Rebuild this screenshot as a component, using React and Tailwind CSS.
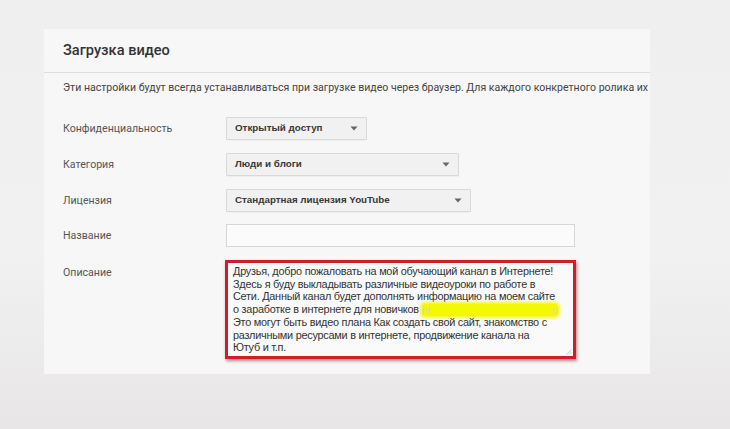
import React from "react";

function Caret() {
  return (
    <svg width="8" height="5" viewBox="0 0 8 5" className="shrink-0">
      <path d="M0.5 0.5 L7.5 0.5 L4 4.5 Z" fill="#666" />
    </svg>
  );
}

function Select({ text, width }) {
  return (
    <div
      className="h-[23px] flex items-center justify-between pl-[8px] pr-[8px] bg-[#f1f1f1] border border-[#d9d9d9] rounded-[1px] shadow-[0_1px_0_rgba(0,0,0,0.03)]"
      style={{ width }}
    >
      <span
        className="text-[9.8px] font-bold text-[#383838]"
        style={{ fontFamily: "'Liberation Sans', Arial, sans-serif" }}
      >
        {text}
      </span>
      <Caret />
    </div>
  );
}

function Row({ label, children, mt }) {
  return (
    <div className={`flex items-start ${mt}`}>
      <div className="w-[163px] shrink-0 text-[10.6px] text-[#555] leading-[23px]">{label}</div>
      {children}
    </div>
  );
}

export default function App() {
  const lines = [
    "Друзья, добро пожаловать на мой обучающий канал в Интернете!",
    "Здесь я буду выкладывать различные видеоуроки по работе в",
    "Сети. Данный канал будет дополнять информацию на моем сайте",
  ];
  return (
    <div
      className="w-[730px] h-[429px] overflow-hidden pl-[44px] pt-[29px] bg-[linear-gradient(180deg,#efefef_0%,#f1f1f1_60%,#e8e6e6_100%)]"
      style={{ fontFamily: "Roboto, 'Noto Sans', sans-serif" }}
    >
      <div className="w-[606px] h-[345px] bg-[#f7f7f7]">
        <div className="h-[44px] border-b border-[#dedede] flex items-center pl-[19px]">
          <span className="text-[14.6px] text-[#333] font-medium">Загрузка видео</span>
        </div>
        <div className="pl-[19px] pt-[7px]">
          <div className="text-[10.55px] text-[#444] leading-[16px] whitespace-nowrap">
            Эти настройки будут всегда устанавливаться при загрузке видео через браузер. Для каждого конкретного ролика их
          </div>
          <Row label="Конфиденциальность" mt="mt-[21px]">
            <Select text="Открытый доступ" width={141} />
          </Row>
          <Row label="Категория" mt="mt-[13px]">
            <Select text="Люди и блоги" width={233} />
          </Row>
          <Row label="Лицензия" mt="mt-[13px]">
            <Select text="Стандартная лицензия YouTube" width={245} />
          </Row>
          <Row label="Название" mt="mt-[12px]">
            <div className="w-[349px] h-[23px] bg-[#fbfbfb] border border-[#d6d6d6]" />
          </Row>
          <div className="flex items-start mt-[13px]">
            <div className="w-[162px] shrink-0 text-[10.6px] text-[#555] leading-[20px] pt-[3px]">Описание</div>
            <div className="relative w-[351px] h-[99px] border-[3px] border-[#cc1f2a] bg-[#fafafa] shadow-[1px_2px_3px_rgba(80,0,0,0.45)] pl-[5px] pt-[2px]">
              <div
                className="text-[10.9px] tracking-[-0.25px] text-[#333] leading-[12.6px] whitespace-nowrap"
                style={{ fontFamily: "'Liberation Sans', Arial, sans-serif" }}
              >
                {lines.map((l) => (
                  <div key={l}>{l}</div>
                ))}
                <div>
                  о заработке в интернете для новичков{" "}
                  <span className="inline-block w-[136px] h-[12px] align-middle bg-[#f4f800] rounded-[3px] shadow-[0_0_3px_2px_rgba(244,248,0,0.85)] text-[#dfe380] leading-[12px]">
                    ht<span className="float-right">u</span>
                  </span>
                </div>
                <div>Это могут быть видео плана Как создать свой сайт, знакомство с</div>
                <div>различными ресурсами в интернете, продвижение канала на</div>
                <div>Ютуб и т.п.</div>
              </div>
              <svg width="6" height="6" viewBox="0 0 6 6" className="absolute right-[1px] bottom-[1px]">
                <path d="M5.5 0.5 L0.5 5.5 M5.5 3 L3 5.5" stroke="#bbb" strokeWidth="0.8" />
              </svg>
            </div>
          </div>
        </div>
      </div>
    </div>
  );
}
